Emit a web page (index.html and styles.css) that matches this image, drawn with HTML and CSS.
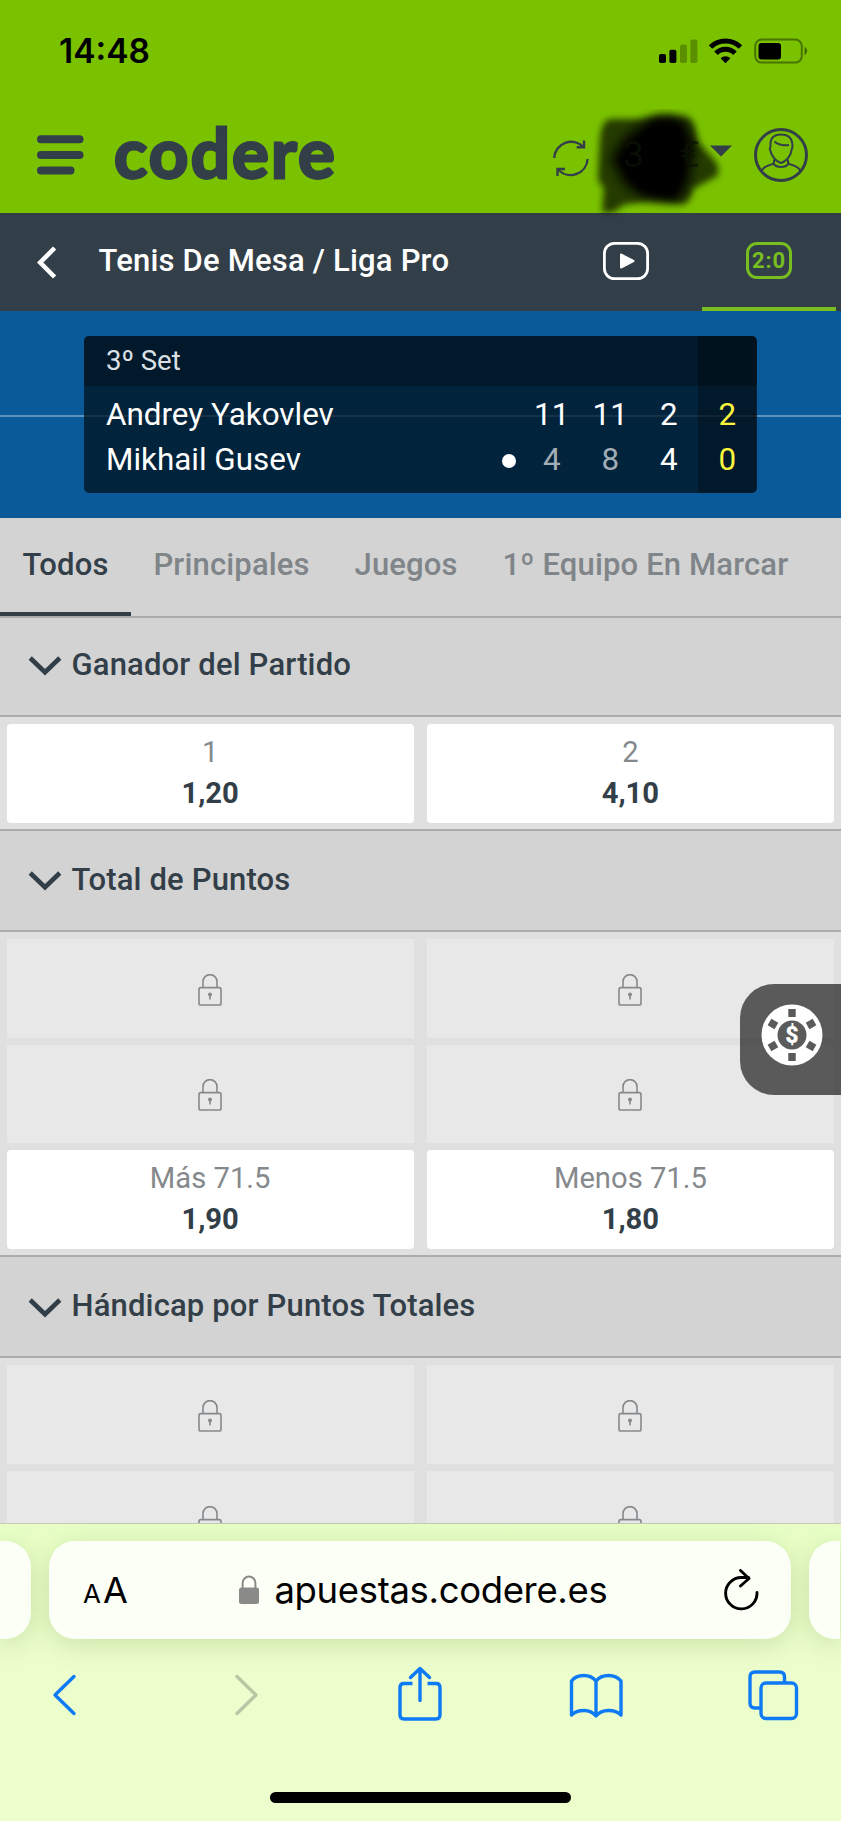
FILE: index.html
```html
<!DOCTYPE html>
<html lang="es">
<head>
  <meta charset="UTF-8">
  <meta name="viewport" content="width=device-width, initial-scale=1.0">
  <title>Codere - Tenis De Mesa</title>
  <link rel="stylesheet" href="styles.css">
</head>
<body>
  <!-- iconos compartidos -->
  <svg class="defs" width="0" height="0">
    <symbol id="lock" viewBox="0 0 24 32">
      <g fill="none" stroke="#85898c" stroke-width="1.6">
        <rect x="1" y="13.6" width="22" height="17.4" rx="1.8"/>
        <path d="M5 13.6V7.6a7 7 0 0 1 14 0v6"/>
      </g>
      <circle cx="12" cy="20.6" r="2" fill="#85898c"/>
      <path d="M12 20v5.6" stroke="#85898c" stroke-width="1.6"/>
    </symbol>
    <symbol id="chevron" viewBox="0 0 34 22">
      <path d="M2.2 3 17 17.2 31.8 3" fill="none" stroke="#333f48" stroke-width="4.6"/>
    </symbol>
  </svg>

  <header class="header">
    <div class="status">
      <span class="time">14:48</span>
      <svg width="150" height="26" viewBox="0 0 150 26">
        <rect x="0" y="16" width="7" height="9" rx="1.8"/>
        <rect x="10.4" y="11.8" width="7" height="13.2" rx="1.8"/>
        <g opacity=".25">
          <rect x="21" y="6.6" width="7" height="18.4" rx="1.8"/>
          <rect x="31.4" y="1.6" width="7" height="23.4" rx="1.8"/>
        </g>
        <path d="M51.5 9a21.5 21.5 0 0 1 30 0M57 15.2a13.3 13.3 0 0 1 19 0" fill="none" stroke="#000" stroke-width="5"/>
        <path d="M66.5 25.2 61.6 20.2a7 7 0 0 1 9.8 0z"/>
        <rect x="96.2" y="1.6" width="46.6" height="23" rx="6.5" fill="none" stroke="#000" stroke-opacity=".4" stroke-width="2"/>
        <rect x="99.5" y="5" width="22.5" height="16.5" rx="3"/>
        <path d="M145.5 8.5q5.5 4.5 0 9z" opacity=".45"/>
      </svg>
    </div>
    <div class="brand-row">
      <svg class="menu" width="47" height="40" viewBox="0 0 47 40" fill="#333f48">
        <rect x="0" y="0.3" width="46.5" height="8" rx="4"/>
        <rect x="0" y="16" width="46.5" height="8" rx="4"/>
        <rect x="0" y="31.5" width="37.5" height="8" rx="4"/>
      </svg>
      <span class="logo">codere</span>
      <svg class="refresh" width="36" height="40" viewBox="0 0 36 40" fill="none" stroke="#333f48" stroke-width="2.4">
        <path d="M1.2 20A17 17 0 0 1 30.5 9M34.6 21A17 17 0 0 1 5.5 32"/>
        <path d="M31 2.5V9.3H23.6M4.5 38V31H12"/>
      </svg>
      <div class="balance">
        <svg class="scribble" width="140" height="110" viewBox="0 0 140 110">
          <defs>
            <filter id="soft" x="-20%" y="-20%" width="140%" height="140%"><feGaussianBlur stdDeviation="3"/></filter>
            <filter id="softer" x="-20%" y="-20%" width="140%" height="140%"><feGaussianBlur stdDeviation="6"/></filter>
          </defs>
          <path d="M20 10 Q12 14 11 30L9 68Q10 76 15 78L13 103Q25 106 34 96L60 92 95 95Q103 90 104 80L128 67Q132 61 126 52L108 32Q107 12 98 8L70 7 50 10z" fill="#0c1500" opacity=".78" filter="url(#soft)"/>
          <path d="M62 10Q85 2 96 14L106 36 100 72 90 92 58 90 36 76 22 50 36 28z" fill="#000" filter="url(#softer)"/>
          <path d="M66 14 92 18 92 66 84 88 50 80 32 50z" fill="#000" filter="url(#soft)"/>
        </svg>
        <span>3</span><span>€</span>
      </div>
      <svg class="caret" width="22" height="12" viewBox="0 0 22 12"><path d="M0 .5h22L11 11.5z" fill="#333f48"/></svg>
      <svg class="avatar" width="54" height="54" viewBox="0 0 54 54" fill="none" stroke="#333f48" stroke-width="2">
        <circle cx="27" cy="27" r="25.5" stroke-width="3"/>
        <path d="M16.5 18.5Q15.5 6.5 27 6.5T38.5 18.5L36.5 26Q33 33 27 35 21 33 17.5 26L15.8 21z"/>
        <path d="M20.5 13.5Q25 18 35 17"/>
        <path d="M20 31.5V35q-2 1.5-5 2.2-6 1.8-7.5 6M34 31.5V35q2 1.5 5 2.2 6 1.8 7.5 6"/>
        <path d="M19 35.5q3 3.5 8 3.5t8-3.5"/>
      </svg>
    </div>
  </header>

  <nav class="nav">
    <svg class="back" width="20" height="33" viewBox="0 0 20 33"><path d="M17.6 2 3.2 16.5 17.6 31" fill="none" stroke="#fff" stroke-width="4.6"/></svg>
    <h1>Tenis De Mesa / Liga Pro</h1>
    <div class="view-tabs">
      <div class="view">
        <svg width="46" height="38" viewBox="0 0 46 38">
          <rect x="1.4" y="1.4" width="43.2" height="35.2" rx="10" fill="none" stroke="#fff" stroke-width="2.8"/>
          <path d="M18 12.5v13L30.5 19z" fill="#fff" stroke="#fff" stroke-width="2" stroke-linejoin="round"/>
        </svg>
      </div>
      <div class="view active"><span class="score-icon">2:0</span></div>
    </div>
  </nav>

  <section class="scoreboard">
    <div class="card">
      <div class="set">3º Set</div>
      <div class="player">
        <span>Andrey Yakovlev</span><i></i>
        <b>11</b><b>11</b><b>2</b><b class="total">2</b>
      </div>
      <div class="player">
        <span>Mikhail Gusev</span><i class="serve"></i>
        <b class="lost">4</b><b class="lost">8</b><b>4</b><b class="total">0</b>
      </div>
    </div>
  </section>

  <div class="tabs">
    <div class="tab active">Todos</div>
    <div class="tab">Principales</div>
    <div class="tab">Juegos</div>
    <div class="tab">1º Equipo En Marcar</div>
  </div>

  <main class="markets">
    <section class="market">
      <h2><svg width="34" height="22"><use href="#chevron"/></svg>Ganador del Partido</h2>
      <div class="odds">
        <div class="odd"><span>1</span><strong>1,20</strong></div>
        <div class="odd"><span>2</span><strong>4,10</strong></div>
      </div>
    </section>

    <section class="market">
      <h2><svg width="34" height="22"><use href="#chevron"/></svg>Total de Puntos</h2>
      <div class="odds">
        <div class="odd locked"><svg width="24" height="32"><use href="#lock"/></svg></div>
        <div class="odd locked"><svg width="24" height="32"><use href="#lock"/></svg></div>
        <div class="odd locked"><svg width="24" height="32"><use href="#lock"/></svg></div>
        <div class="odd locked"><svg width="24" height="32"><use href="#lock"/></svg></div>
        <div class="odd"><span>Más 71.5</span><strong>1,90</strong></div>
        <div class="odd"><span>Menos 71.5</span><strong>1,80</strong></div>
      </div>
    </section>

    <section class="market">
      <h2><svg width="34" height="22"><use href="#chevron"/></svg>Hándicap por Puntos Totales</h2>
      <div class="odds">
        <div class="odd locked"><svg width="24" height="32"><use href="#lock"/></svg></div>
        <div class="odd locked"><svg width="24" height="32"><use href="#lock"/></svg></div>
        <div class="odd locked"><svg width="24" height="32"><use href="#lock"/></svg></div>
        <div class="odd locked"><svg width="24" height="32"><use href="#lock"/></svg></div>
      </div>
    </section>
  </main>

  <!-- acceso flotante al casino -->
  <div class="casino">
    <svg width="62" height="62" viewBox="-31 -31 62 62">
      <circle r="30.5" fill="#fff"/>
      <g fill="#5b5b5b">
        <circle r="14.5"/>
        <rect id="notch" x="-3.7" y="-26" width="7.4" height="8"/>
        <use href="#notch" transform="rotate(60)"/>
        <use href="#notch" transform="rotate(120)"/>
        <use href="#notch" transform="rotate(180)"/>
        <use href="#notch" transform="rotate(240)"/>
        <use href="#notch" transform="rotate(300)"/>
      </g>
      <text class="dollar" y="8" text-anchor="middle">$</text>
    </svg>
  </div>

  <footer class="safari">
    <div class="address-row">
      <div class="pill side"></div>
      <div class="pill address">
        <span class="aa"><small>A</small>A</span>
        <div class="url">
          <svg width="20" height="30" viewBox="0 0 20 30">
            <rect x="0" y="12.5" width="20" height="16.5" rx="2.5" fill="#8a8b88"/>
            <path d="M3.6 13V8a6.4 6.4 0 0 1 12.8 0v5" fill="none" stroke="#8a8b88" stroke-width="2"/>
          </svg>
          <span>apuestas.codere.es</span>
        </div>
        <svg width="36" height="42" viewBox="0 0 36 42" fill="none" stroke="#000" stroke-width="2.9" stroke-linecap="round" stroke-linejoin="round">
          <path d="M34 23.5A15.7 15.7 0 1 1 18.3 8.5H25.5"/>
          <path d="M17.5 1.5 26 9.5 17.5 17"/>
        </svg>
      </div>
      <div class="pill side"></div>
    </div>
    <div class="toolbar">
      <svg width="60" height="60" viewBox="0 0 60 60"><path d="M39 11.5 20 30 39 48.5"/></svg>
      <svg class="off" width="60" height="60" viewBox="0 0 60 60"><path d="M25 11.5 44 30 25 48.5"/></svg>
      <svg width="60" height="60" viewBox="0 0 60 60"><path d="M23.5 18.5H15q-4 0-4 4V50q0 4 4 4H47q4 0 4-4V22.5q0-4-4-4H38.5" stroke-linecap="butt"/><path d="M31 35.5V4M21.5 12.5 31 3.5 40.5 12.5"/></svg>
      <svg width="60" height="60" viewBox="0 0 60 60"><path d="M30 16Q25.5 10.5 18 10.5 9.5 10.5 5.5 16V50Q10 45.5 18 45.5 25.5 45.5 30 51 34.5 45.5 42.5 45.5 50.5 45.5 55 50V16Q50.5 10.5 42.5 10.5 34.5 10.5 30 16zV50"/></svg>
      <svg width="60" height="60" viewBox="0 0 60 60"><path d="M16 43H11q-5 0-5-5V12q0-5 5-5H35.5q5 0 5 5V17"/><rect x="17" y="18" width="35.5" height="35.5" rx="5"/></svg>
    </div>
    <div class="home-bar"></div>
  </footer>
</body>
</html>
```
FILE: styles.css
```css
* {
  box-sizing: border-box;
  margin: 0;
  padding: 0;
}
body {
  width: 841px;
  height: 1821px;
  overflow: hidden;
  position: relative;
  display: flex;
  flex-direction: column;
  font-family: Roboto, "Liberation Sans", sans-serif;
  color: #333f48;
  background: #e0e0e0;
}
svg {
  display: block;
  flex: none;
}
.defs {
  position: absolute;
}

/* cabecera */
.header {
  height: 213px;
  flex: none;
  background: #7ac100;
}
.status {
  height: 102px;
  padding: 0 32px 0 59px;
  display: flex;
  justify-content: space-between;
  align-items: center;
}
.time {
  font: 600 33.5px/40px Inter, "Liberation Sans", sans-serif;
  color: #000;
}
.brand-row {
  height: 106px;
  padding: 0 33px 0 37px;
  display: flex;
  align-items: center;
}
.logo {
  font: 700 69px/80px Lato, "Open Sans", sans-serif;
  letter-spacing: 2.2px;
  -webkit-text-stroke: 2.8px #333f48;
  margin: -7px 0 0 30px;
  width: 224px;
}
.refresh {
  margin: 6px 0 0 216px;
}
.balance {
  position: relative;
  width: 121px;
  padding: 0 10px 0 34px;
  display: flex;
  justify-content: space-between;
  font-size: 37px;
  line-height: 44px;
  color: #0b1304;
}
.balance span {
  position: relative;
  opacity: 0.75;
}
.scribble {
  position: absolute;
  left: 0;
  top: -24px;
}
.caret {
  position: relative;
  margin-top: -9px;
}
.avatar {
  margin-left: 22px;
}

/* barra de navegacion */
.nav {
  height: 98px;
  flex: none;
  padding: 0 5px 0 37px;
  display: flex;
  align-items: center;
  background: #333f48;
  color: #fff;
}
.nav h1 {
  flex: 1;
  margin: -3px 0 0 41.5px;
  font-size: 31px;
  font-weight: 500;
  letter-spacing: 0.2px;
}
.view-tabs {
  display: flex;
  gap: 9px;
  align-self: stretch;
}
.view {
  width: 134px;
  padding-top: 29px;
  display: flex;
  justify-content: center;
  align-items: flex-start;
}
.view.active {
  border-bottom: 4px solid #78be20;
}
.score-icon {
  width: 46px;
  height: 37px;
  border: 3px solid #78be20;
  border-radius: 11px;
  color: #78be20;
  font: 700 22px/31px Roboto, sans-serif;
  letter-spacing: 0.8px;
  text-align: center;
}

/* marcador */
.scoreboard {
  height: 207px;
  flex: none;
  padding: 25px 84.5px 0 84px;
  background: linear-gradient(#5c93bf, #5c93bf) 0 104px / 100% 2px no-repeat, #0a5a9a;
}
.card {
  height: 157px;
  border-radius: 5px;
  overflow: hidden;
  background: linear-gradient(rgba(0, 0, 0, 0.28), rgba(0, 0, 0, 0.28)) right / 58.5px 100% no-repeat, rgba(0, 14, 24, 0.72);
}
.set {
  height: 50px;
  padding-left: 22px;
  font-size: 27.5px;
  line-height: 50px;
  color: #dbe0e5;
  background: rgba(0, 0, 0, 0.28);
}
.player {
  display: grid;
  grid-template-columns: 1fr 28px repeat(4, 58.5px);
  align-items: center;
  height: 45px;
  padding-left: 22px;
  color: #fff;
  font-size: 31.4px;
  line-height: 45px;
}
.set + .player {
  margin-top: 6px;
}
.player b {
  font-weight: 400;
  text-align: center;
}
.player .lost {
  color: #a3adb5;
}
.player .total {
  color: #fbf53c;
}
.serve {
  width: 14px;
  height: 14px;
  margin: 3px auto 0;
  border-radius: 50%;
  background: #fff;
}

/* pestanas */
.tabs {
  height: 100px;
  flex: none;
  display: flex;
  background: #d3d3d3;
  border-bottom: 2px solid #a9adb0;
}
.tab {
  padding: 0 22.5px 0 22.4px;
  font-size: 31px;
  font-weight: 500;
  letter-spacing: 0.15px;
  line-height: 94px;
  white-space: nowrap;
  color: #7f8589;
}
.tab.active {
  color: #333f48;
  border-bottom: 4px solid #333f48;
}

/* mercados */
.markets {
  height: 905px;
  flex: none;
  overflow: hidden;
}
.market h2 {
  height: 103px;
  padding: 0 0 2px 27.5px;
  display: flex;
  align-items: center;
  gap: 10px;
  font-size: 31px;
  font-weight: 500;
  letter-spacing: 0.16px;
  background: #d3d3d3;
  border-top: 2px solid #a9adb0;
  border-bottom: 2px solid #a9adb0;
}
.market h2 svg {
  margin-top: 4px;
}
.market:first-child h2 {
  height: 99px;
  padding-bottom: 5px;
  border-top: 0;
}
.odds {
  display: grid;
  grid-template-columns: 1fr 1fr;
  grid-auto-rows: 98.6px;
  gap: 7px 13px;
  padding: 7px 7px 6.4px 6.5px;
}
.odd {
  display: flex;
  flex-direction: column;
  align-items: center;
  padding-top: 8px;
  border-radius: 4px;
  background: #fff;
  font-size: 29.2px;
  line-height: 41px;
}
.odd span {
  color: #85898c;
}
.odd.locked {
  justify-content: center;
  padding-top: 3px;
  border-radius: 0;
  background: #e8e8e8;
}

.casino {
  position: absolute;
  right: 0;
  top: 984px;
  width: 101px;
  height: 111px;
  padding: 20px 0 0 21px;
  border-radius: 34px 0 0 34px;
  background: rgba(0, 0, 0, 0.61);
}
.dollar {
  font: 900 23px Roboto, sans-serif;
  fill: #fff;
}

/* barra inferior del navegador */
.safari {
  height: 298px;
  flex: none;
  padding-top: 17px;
  background: linear-gradient(#e7fec5, #edfecd 50%);
  border-top: 1px solid #c4cabb;
}
.address-row {
  display: flex;
  gap: 18px;
}
.pill {
  height: 98px;
  background: #fcfff5;
  box-shadow: 0 6px 26px rgba(80, 110, 40, 0.2);
}
.side {
  width: 31px;
  border-radius: 0 26px 26px 0;
}
.side:last-child {
  border-radius: 26px 0 0 26px;
}
.address {
  width: 742px;
  padding: 0 32px 0 34px;
  display: flex;
  justify-content: space-between;
  align-items: center;
  border-radius: 26px;
  color: #000;
  font-family: Inter, "Liberation Sans", sans-serif;
}
.aa {
  font-size: 36px;
}
.aa small {
  font-size: 26px;
  margin-right: 2px;
}
.url {
  display: flex;
  align-items: center;
  gap: 15px;
  margin-right: 4px;
  font-size: 36.5px;
  letter-spacing: -0.35px;
}
.toolbar {
  height: 76px;
  margin-top: 26px;
  padding: 0 37.5px 0 34.5px;
  display: flex;
  justify-content: space-between;
  fill: none;
  stroke: #0f7af5;
  stroke-width: 3.4;
  stroke-linecap: round;
  stroke-linejoin: round;
}
.toolbar .off {
  stroke: #b9c5a3;
}
.home-bar {
  width: 301px;
  height: 11px;
  margin: 51px auto 0;
  border-radius: 6px;
  background: #000;
}
```
